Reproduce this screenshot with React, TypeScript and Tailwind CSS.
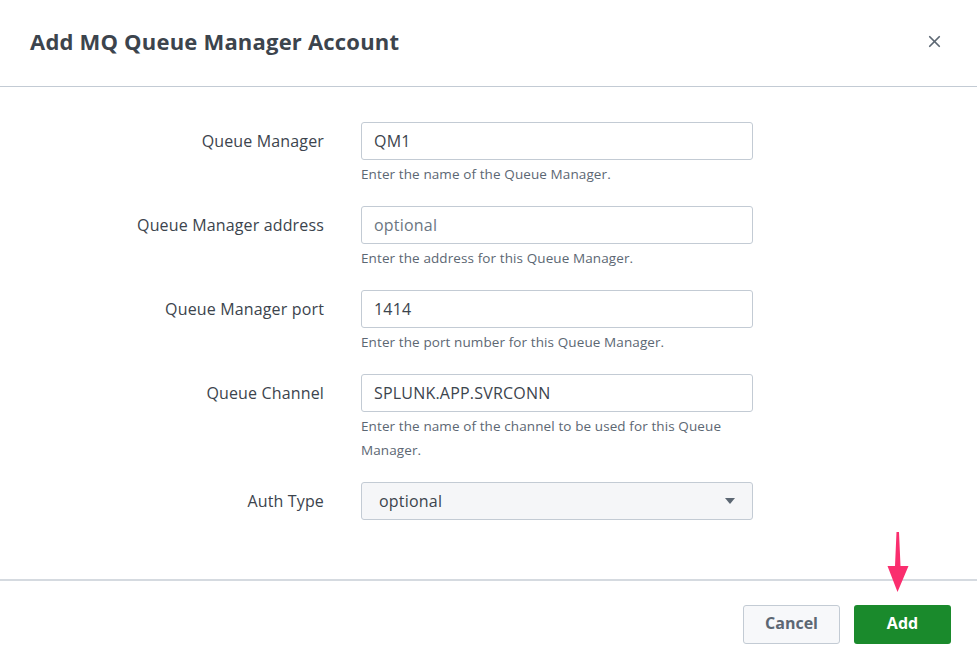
import { X } from "lucide-react";

const fields = [
  { label: "Queue Manager", value: "QM1", help: "Enter the name of the Queue Manager." },
  { label: "Queue Manager address", placeholder: "optional", help: "Enter the address for this Queue Manager." },
  { label: "Queue Manager port", value: "1414", help: "Enter the port number for this Queue Manager." },
  {
    label: "Queue Channel",
    value: "SPLUNK.APP.SVRCONN",
    help: "Enter the name of the channel to be used for this Queue Manager.",
  },
];

export default function App() {
  return (
    <div className="relative flex h-[668px] w-[977px] flex-col bg-white font-['Open_Sans',sans-serif] text-[#3c444d]">
      {/* header */}
      <div className="flex h-[87px] items-center justify-between border-b border-[#c3cbd4] pb-[4px] pl-[30px] pr-[33px]">
        <h1 className="text-[22px] font-bold tracking-[0.2px]">Add MQ Queue Manager Account</h1>
        <X className="h-[19px] w-[19px] text-[#5c6773]" strokeWidth={2.2} />
      </div>

      {/* body */}
      <div className="flex flex-1 flex-col gap-[20px] pt-[35px]">
        {fields.map((f) => (
          <div key={f.label} className="flex">
            <div className="flex h-[38px] w-[324px] items-center justify-end text-[16px] tracking-[0.15px]">
              {f.label}
            </div>
            <div className="ml-[37px] w-[392px]">
              <input
                readOnly
                defaultValue={f.value}
                placeholder={f.placeholder}
                className="h-[38px] w-full rounded-[3px] border border-[#c3cbd4] bg-white px-[12px] text-[16px] tracking-[0.2px] text-[#3c444d] outline-none placeholder:text-[#6b7682]"
              />
              <p className="mt-[2px] text-[13.5px] leading-[24px] tracking-[0.1px] text-[#5c6773]">{f.help}</p>
            </div>
          </div>
        ))}
        <div className="flex">
          <div className="flex h-[38px] w-[324px] items-center justify-end text-[16px] tracking-[0.15px]">
            Auth Type
          </div>
          <div className="ml-[37px] flex h-[38px] w-[392px] items-center justify-between rounded-[3px] border border-[#c3cbd4] bg-[#f5f6f8] pl-[17px] pr-[17px] text-[16px] tracking-[0.2px]">
            <span>optional</span>
            <svg width="10" height="6" viewBox="0 0 10 6">
              <path d="M0 0 H10 L5 6 Z" fill="#5c6773" />
            </svg>
          </div>
        </div>
      </div>

      {/* footer */}
      <div className="flex h-[89px] items-start justify-end gap-[14px] border-t-2 border-[#d5dae0] pr-[26px] pt-[24px]">
        <button className="h-[39px] w-[97px] rounded-[3px] border border-[#c3cbd4] bg-[#f7f8fa] pb-[3px] text-[16px] font-bold text-[#5c6773]">
          Cancel
        </button>
        <button className="h-[39px] w-[97px] rounded-[3px] bg-[#1a8a2c] pb-[3px] text-[16px] font-bold text-white">
          Add
        </button>
      </div>

      {/* annotation arrow */}
      <svg className="absolute left-[884px] top-[530px]" width="28" height="64" viewBox="0 0 28 64">
        <path d="M12.5 2 L15 2 L16.5 36 L24.5 36 L13.5 62 L3.5 36 L11 36 Z" fill="#fa2e6e" />
      </svg>
    </div>
  );
}
